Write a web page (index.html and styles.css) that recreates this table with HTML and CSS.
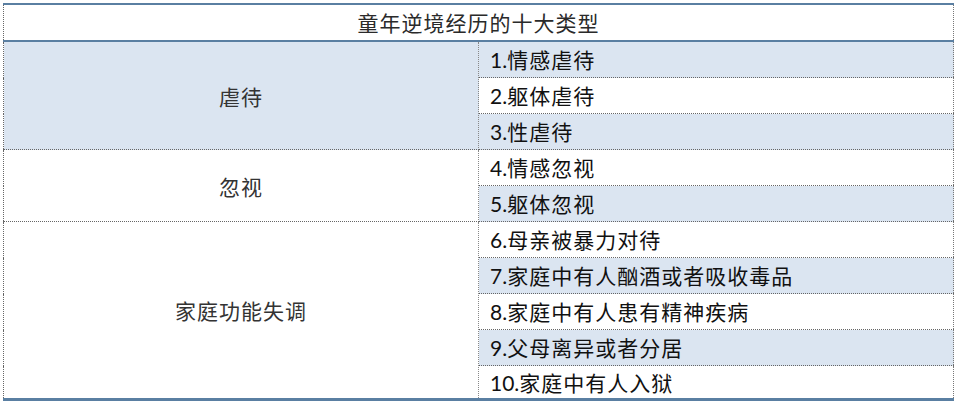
FILE: index.html
```html
<!DOCTYPE html>
<html lang="zh-CN">
<head>
<meta charset="utf-8">
<title>童年逆境经历的十大类型</title>
<link rel="stylesheet" href="styles.css">
</head>
<body>
<div class="wrap">
<table class="ace">
  <thead>
    <tr><th colspan="2" class="title">童年逆境经历的十大类型</th></tr>
  </thead>
  <tbody>
    <tr class="blue"><td rowspan="3" class="group blue">虐待</td><td class="item"><span class="num">1.</span>情感虐待</td></tr>
    <tr><td class="item"><span class="num">2.</span>躯体虐待</td></tr>
    <tr class="blue"><td class="item"><span class="num">3.</span>性虐待</td></tr>
    <tr><td rowspan="2" class="group">忽视</td><td class="item"><span class="num">4.</span>情感忽视</td></tr>
    <tr class="blue"><td class="item"><span class="num">5.</span>躯体忽视</td></tr>
    <tr><td rowspan="5" class="group last">家庭功能失调</td><td class="item"><span class="num">6.</span>母亲被暴力对待</td></tr>
    <tr class="blue"><td class="item"><span class="num">7.</span>家庭中有人酗酒或者吸收毒品</td></tr>
    <tr><td class="item"><span class="num">8.</span>家庭中有人患有精神疾病</td></tr>
    <tr class="blue"><td class="item"><span class="num">9.</span>父母离异或者分居</td></tr>
    <tr class="lastrow"><td class="item"><span class="num">10.</span>家庭中有人入狱</td></tr>
  </tbody>
</table>
</div>
</body>
</html>
```
FILE: styles.css
```css
html, body {
  margin: 0;
  padding: 0;
  background: #ffffff;
}
.wrap {
  padding: 3px 0 0 3px;
}
.ace {
  width: 951px;
  border-collapse: collapse;
  table-layout: fixed;
  font-family: "Noto Sans CJK SC", sans-serif;
  color: #1f1f1f;
  border-top: 2px solid #5a7fa2;
  border-bottom: 3px solid #5a7fa2;
  border-left: 1px dotted #666;
  border-right: 1px dotted #777;
}
.ace td, .ace th {
  padding: 0;
}
.title {
  height: 35px;
  font-weight: normal;
  font-size: 21px;
  letter-spacing: 1px;
  text-align: center;
  color: #2a2a2a;
  border-bottom: 2px solid #5a7fa2;
  line-height: 1;
  vertical-align: middle;
}
.group {
  width: 476px;
  text-align: center;
  vertical-align: middle;
  font-size: 21px;
  letter-spacing: 1px;
  color: #333;
  border-right: 1px dotted #888;
  border-bottom: 1px dotted #666;
  background: #ffffff;
}
.group.last {
  border-bottom: none;
}
.group.blue {
  background: #dbe5f1;
}
.item {
  height: 35px;
  padding-left: 11px !important;
  font-size: 21px;
  letter-spacing: 1px;
  color: #111;
  border-bottom: 1px dotted #666;
  vertical-align: middle;
  line-height: 1;
}
.num {
  font-family: "Lato", "Open Sans", sans-serif;
  letter-spacing: 0;
}
tr.blue .item {
  background: #dbe5f1;
}
tr.lastrow .item {
  border-bottom: none;
  height: 32px;
}
```
